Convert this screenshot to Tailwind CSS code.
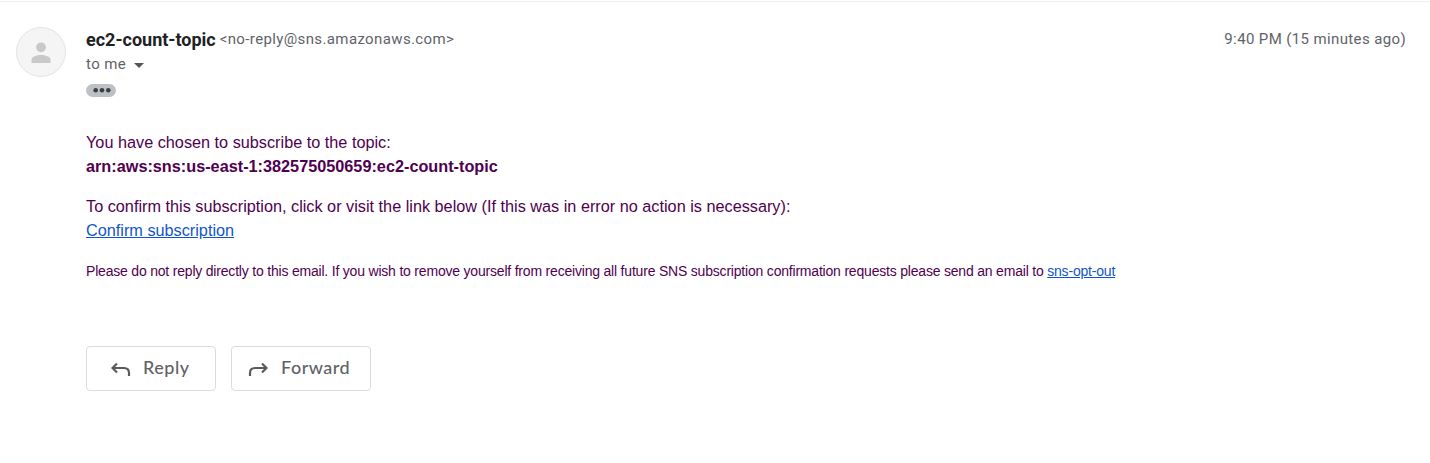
<!DOCTYPE html>
<html lang="en"><head><meta charset="utf-8"><title>Mail</title>
<script src="https://cdn.jsdelivr.net/npm/@tailwindcss/browser@4"></script></head>
<body class="bg-white pt-px">
<main class="flex h-[462px] w-[1430px] overflow-hidden border-t border-[#eceff1] pl-4 pr-6 pt-[25px] font-[Roboto,sans-serif]">
  <div class="mr-5 flex size-[50px] shrink-0 items-center justify-center rounded-full border border-[#e4e4e4] bg-[#f5f5f5]">
    <svg class="h-[22px] w-5" viewBox="0 0 20 22" fill="#c9c9c9"><circle cx="10" cy="6.300" r="4.900"/><path d="M.5 22v-3.500C.5 15.500 6 14 10 14s9.500 1.500 9.500 4.500V22z"/></svg>
  </div>
  <div class="min-w-0 flex-1">
    <header class="flex h-[25px] items-center whitespace-nowrap">
      <h1 class="pt-px text-[18px] font-bold leading-6 text-[#202124]">ec2-count-topic</h1>
      <span class="ml-1 text-[15px] tracking-[0.375px] text-[#5f6368]">&lt;no-reply@sns.amazonaws.com&gt;</span>
      <time class="ml-auto text-[15px] tracking-[0.375px] text-[#5f6368]">9:40 PM (15 minutes ago)</time>
    </header>
    <div class="flex h-[25px] items-center text-[15px] tracking-[0.375px] text-[#5f6368]">to me<svg class="ml-2 mt-px h-[5px] w-[10px]" viewBox="0 0 10 5"><path fill="#555" d="M0 0h10L5 5z"/></svg></div>
    <div class="mt-[7px] flex h-[13px] w-[30px] items-center justify-center rounded-full bg-[#bdc1c6]"><svg class="ml-px h-[5px] w-[18px]" viewBox="0 0 18 5" fill="#3c4043"><circle cx="2.700" cy="2.300" r="2.300"/><circle cx="9" cy="2.300" r="2.300"/><circle cx="15.300" cy="2.300" r="2.300"/></svg></div>
    <article class="mt-[33px] whitespace-nowrap font-['Liberation_Sans',sans-serif] text-[16.250px] leading-6 text-[#500050]">
      <p>You have chosen to subscribe to the topic:<br><b>arn:aws:sns:us-east-1:382575050659:ec2-count-topic</b></p>
      <p class="mt-4">To confirm this subscription, click or visit the link below (If this was in error no action is necessary):<br><a class="text-[#1155cc] underline">Confirm subscription</a></p>
      <p class="mt-[17px] text-[14px] tracking-[-0.198px]">Please do not reply directly to this email. If you wish to remove yourself from receiving all future SNS subscription confirmation requests please send an email to <a class="text-[#1155cc] underline">sns-opt-out</a></p>
    </article>
    <footer class="mt-[63px] flex gap-[15px] font-[Lato,sans-serif] text-[18px] font-medium tracking-[0.500px] text-[#5f6368]">
      <button class="flex h-[45px] w-[130px] items-center rounded border border-[#dadce0] pl-6"><svg class="mr-3 size-5" viewBox="0 0 20 20" fill="none" stroke="#5a5a5a" stroke-width="2.200"><path d="M6 4.500 1.500 9 6 13.500M1.500 9H13c3.500 0 5 2 5 5v3"/></svg><span class="pb-0.5">Reply</span></button>
      <button class="flex h-[45px] w-[140px] items-center rounded border border-[#dadce0] pl-4"><svg class="mr-[13px] size-5" viewBox="0 0 20 20" fill="none" stroke="#5a5a5a" stroke-width="2.200"><path d="M14 4.500 18.500 9 14 13.500M18.500 9H7c-3.500 0-5 2-5 5v3"/></svg><span class="pb-0.5">Forward</span></button>
    </footer>
  </div>
</main></body></html>
